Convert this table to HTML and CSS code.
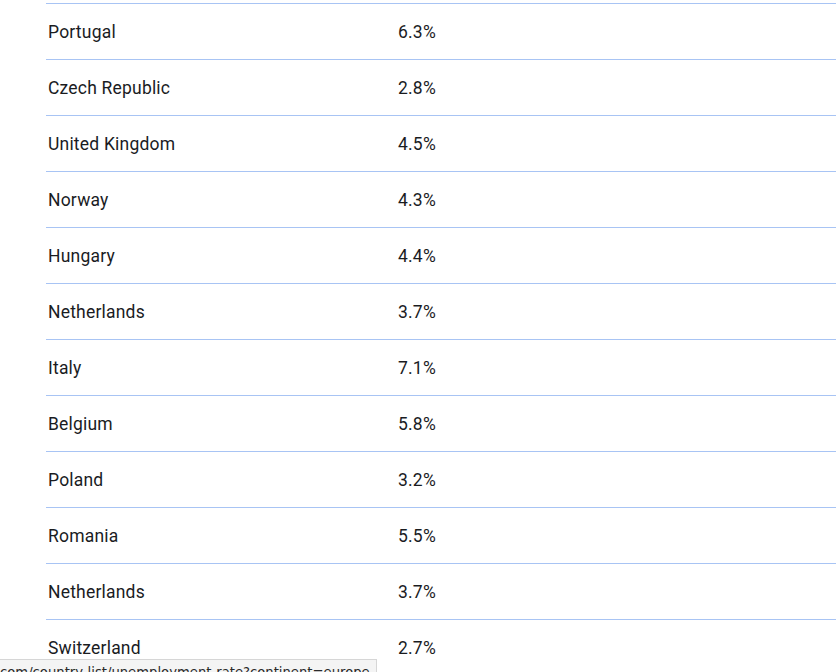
FILE: index.html
```html
<!DOCTYPE html>
<html lang="en">
<head>
<meta charset="utf-8">
<link rel="stylesheet" href="styles.css">
</head>
<body>
<div class="table">
  <div class="row"><span class="name">Portugal</span><span class="val">6.3%</span></div>
  <div class="row"><span class="name">Czech Republic</span><span class="val">2.8%</span></div>
  <div class="row"><span class="name">United Kingdom</span><span class="val">4.5%</span></div>
  <div class="row"><span class="name">Norway</span><span class="val">4.3%</span></div>
  <div class="row"><span class="name">Hungary</span><span class="val">4.4%</span></div>
  <div class="row"><span class="name">Netherlands</span><span class="val">3.7%</span></div>
  <div class="row"><span class="name">Italy</span><span class="val">7.1%</span></div>
  <div class="row"><span class="name">Belgium</span><span class="val">5.8%</span></div>
  <div class="row"><span class="name">Poland</span><span class="val">3.2%</span></div>
  <div class="row"><span class="name">Romania</span><span class="val">5.5%</span></div>
  <div class="row"><span class="name">Netherlands</span><span class="val">3.7%</span></div>
  <div class="row"><span class="name">Switzerland</span><span class="val">2.7%</span></div>
</div>
<div class="status">com/country-list/unemployment-rate?continent=europe</div>
</body>
</html>
```
FILE: styles.css
```css
html, body {
  margin: 0;
  padding: 0;
  background: #ffffff;
  overflow: hidden;
}
body {
  font-family: Roboto, "Liberation Sans", sans-serif;
  color: #1a1c1f;
  padding-top: 3px;
  height: 672px;
  box-sizing: border-box;
}
.table {
  margin-left: 46px;
}
.row {
  display: flex;
  align-items: center;
  height: 56px;
  box-sizing: border-box;
  border-top: 1px solid #a8c4f4;
  padding-left: 2px;
  font-size: 17.5px;
  letter-spacing: 0.2px;
}
.name {
  width: 350px;
}
.val {
  flex: 1;
}
.status {
  position: fixed;
  left: 0;
  top: 659px;
  width: 377px;
  height: 24px;
  box-sizing: border-box;
  background: #f4f4f4;
  border: 1px solid #d6d6d6;
  border-left: none;
  font-family: "DejaVu Sans", sans-serif;
  font-size: 13.2px;
  color: #2a2a2a;
  padding: 5px 0 0 0;
  white-space: nowrap;
  overflow: hidden;
}
```
